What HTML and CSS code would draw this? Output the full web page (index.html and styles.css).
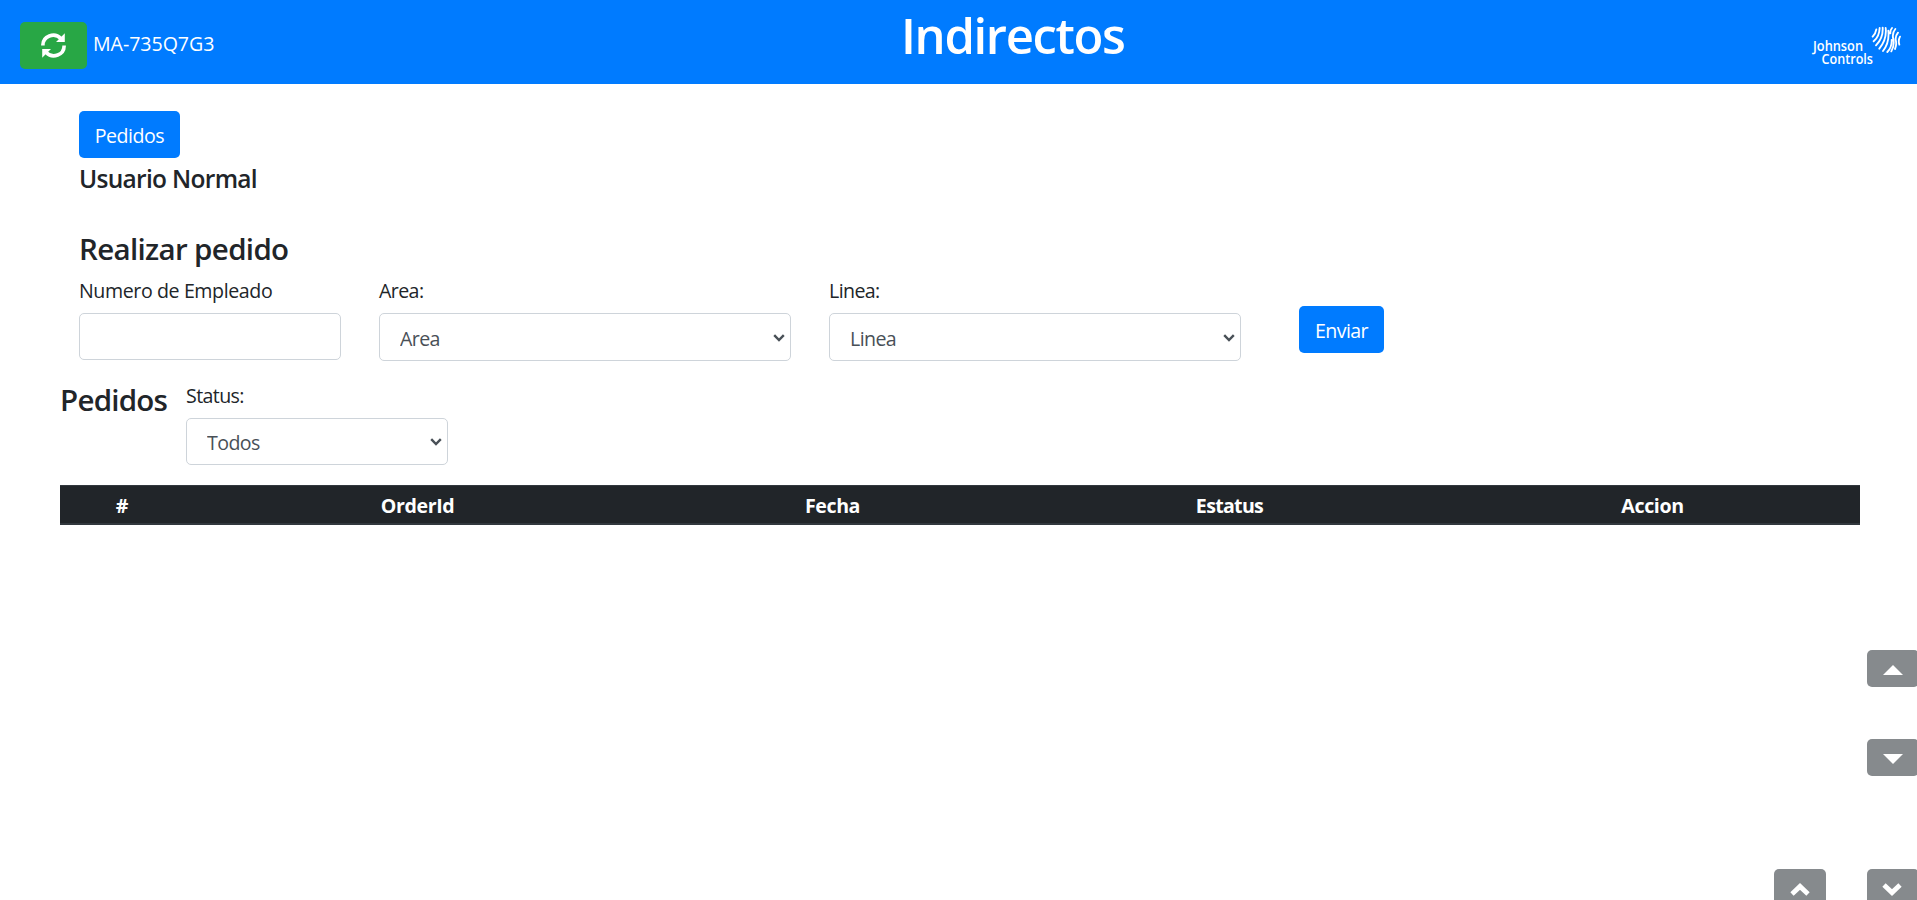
FILE: index.html
```html
<!DOCTYPE html>
<html lang="es">
<head>
<meta charset="utf-8">
<title>Indirectos</title>
<link rel="stylesheet" href="styles.css">
</head>
<body>
<header class="topbar">
  <div class="station">
    <button class="btn btn-refresh" aria-label="Actualizar">
      <svg width="25" height="25" viewBox="0 0 25 25"><g fill="none" stroke="#fff" stroke-width="3.6"><path d="M1.9 12.5A10.3 9.9 0 0 1 19.8 5.5"/><path d="M23.1 12.5A10.3 9.9 0 0 1 5.2 19.5"/></g><path fill="#fff" d="M23.8 0.3V9H15ZM1.2 24.7V16H10Z"/></svg>
    </button>
    <span class="t-station">MA-735Q7G3</span>
  </div>
  <h1 class="t-title">Indirectos</h1>
  <svg class="logo" width="90" height="44" viewBox="0 0 90 44">
    <g fill="#fff" font-family="'Open Sans', sans-serif" font-size="13.6" font-weight="600">
      <text x="2" y="27" textLength="50" lengthAdjust="spacingAndGlyphs">Johnson</text>
      <text x="10.500" y="40" textLength="51.500" lengthAdjust="spacingAndGlyphs">Controls</text>
    </g>
    <g transform="translate(57 -2) scale(.3333)" fill="none" stroke="#fff" stroke-width="5.6" stroke-linecap="round">
      <path d="M14 44Q23 34 25 22M17 58Q34 44 35 18M24 70Q46 48 44 17M34 80Q57 52 53 18M45 87Q65 62 61 26M58 90Q72 76 71 54M72 18Q66 25 67 34M82 21Q71 34 76 52Q80 70 70 88M90 32Q80 44 84 58Q86 70 81 81M96 44Q90 55 94 68"/>
    </g>
  </svg>
</header>
<main>
  <section class="order">
    <button class="btn btn-primary btn-orders"><span class="t-orders">Pedidos</span></button>
    <h5 class="t-user">Usuario Normal</h5>
    <h3 class="t-make">Realizar pedido</h3>
    <form class="fields">
      <label class="field narrow"><span class="t-emp">Numero de Empleado</span><input class="control" type="text"></label>
      <label class="field wide"><span class="t-area">Area:</span>
        <select class="control tall"><option>Area</option></select></label>
      <label class="field wide"><span class="t-line">Linea:</span>
        <select class="control tall"><option>Linea</option></select></label>
      <button type="button" class="btn btn-primary btn-send"><span class="t-send">Enviar</span></button>
    </form>
  </section>
  <section class="filter">
    <h3 class="t-list">Pedidos</h3>
    <label class="field narrow"><span class="t-status">Status:</span>
      <select class="control"><option>Todos</option></select></label>
  </section>
  <table class="orders">
    <colgroup><col class="c1"><col class="c2"><col class="c3"><col class="c4"><col class="c5"></colgroup>
    <thead><tr><th>#</th><th>OrderId</th><th>Fecha</th><th class="t-estatus">Estatus</th><th>Accion</th></tr></thead>
  </table>
</main>
<button class="float f-up" aria-label="Subir"><svg width="20" height="10" viewBox="0 0 20 10"><path fill="#fff" d="M0 10L10 0L20 10Z"/></svg></button>
<button class="float f-down" aria-label="Bajar"><svg width="20" height="10" viewBox="0 0 20 10"><path fill="#fff" d="M0 0H20L10 10Z"/></svg></button>
<button class="float f-first" aria-label="Inicio"><svg width="20" height="13" viewBox="0 0 20 13"><path fill="none" stroke="#fff" stroke-width="4.8" d="M2 11L10 3.400L18 11"/></svg></button>
<button class="float f-last" aria-label="Final"><svg width="20" height="13" viewBox="0 0 20 13"><path fill="none" stroke="#fff" stroke-width="4.8" d="M2 2L10 9.600L18 2"/></svg></button>
</body>
</html>
```
FILE: styles.css
```css
* { box-sizing: border-box; }
body {
  margin: 0;
  height: 900px;
  overflow: hidden;
  background: #fff;
  color: #212529;
  font: 400 19.6px/30px "Open Sans", "Noto Sans", sans-serif;
  letter-spacing: -0.4px;
}
h1, h3, h5 { margin: 0; font-weight: 600; white-space: nowrap; }
span { white-space: nowrap; }
button, input, select { font: inherit; letter-spacing: inherit; }

.topbar {
  height: 84px;
  padding: 0 16px 0 20px;
  display: grid;
  grid-template-columns: 881px 1fr 90px;
  background: #007bff;
  color: #fff;
}
.station { display: flex; align-items: flex-start; gap: 6px; padding-top: 22px; }
.station span { padding-top: 7px; letter-spacing: -0.05px; }
.topbar h1 { font-size: 49px; line-height: 60px; padding-top: 5px; letter-spacing: -1.35px; }
.logo { margin-top: 24px; letter-spacing: 0; }

.btn { height: 47px; padding: 0; border: 0; border-radius: 5px; color: #fff; display: flex; align-items: center; justify-content: center; }
.btn-refresh { width: 67px; background: #28a745; }
.btn-primary { background: #007bff; padding-top: 3px; }
.btn-orders { width: 101px; letter-spacing: -0.5px; }
.btn-send { width: 85px; margin: 36px 0 0 20px; letter-spacing: -0.6px; }

.order { padding: 27px 0 0 79px; }
.t-user { font-size: 24.5px; line-height: 30px; margin-top: 6px; letter-spacing: -0.7px; }
.t-make { font-size: 29.5px; line-height: 36px; margin-top: 37px; letter-spacing: -0.66px; }
.fields { display: flex; align-items: flex-start; gap: 38px; margin-top: 3px; }
.field { display: flex; flex-direction: column; gap: 8px; line-height: 30px; }
.field > span { height: 35px; padding-top: 6px; }
.t-area, .t-line, .t-status { letter-spacing: -0.6px; }
.narrow { width: 262px; }
.wide { width: 412px; }
.control {
  width: 100%;
  height: 47px;
  padding: 2px 14px 0 20px;
  border: 1px solid #ced4da;
  border-radius: 5px;
  background: #fff;
  color: #495057;
}
select.control {
  appearance: none;
  letter-spacing: -0.6px;
  background: #fff url("data:image/svg+xml,%3Csvg xmlns='http://www.w3.org/2000/svg' width='12' height='8' viewBox='0 0 12 8'%3E%3Cpath d='M1.200 1.200L6 6L10.800 1.200' fill='none' stroke='%23495057' stroke-width='2.400'/%3E%3C/svg%3E") no-repeat right 5px top 19px;
}
select.tall { height: 48px; padding-top: 3px; background-position: right 5px top 20px; }

.filter { display: flex; gap: 20px; padding: 14px 0 0 60px; }
.filter h3 { width: 106px; font-size: 29.5px; line-height: 36px; padding-top: 7px; letter-spacing: -0.75px; }

.orders { width: 1800px; margin: 20px 0 0 60px; border-collapse: collapse; table-layout: fixed; background: #212529; color: #fff; }
.orders tr { height: 38px; }
.orders th { padding: 3px 0 0; border-top: 1px solid #32383e; border-bottom: 2px solid #32383e; font-weight: 700; line-height: 30px; }
.orders .t-estatus { letter-spacing: -0.7px; }
.c1 { width: 124px; }
.c2 { width: 467px; }
.c3 { width: 363px; }
.c4 { width: 431px; }
.c5 { width: 415px; }

.float {
  position: absolute;
  width: 52px;
  height: 37px;
  padding: 3px 0 0;
  border: 0;
  border-radius: 5px;
  background: #868a8d;
  display: flex;
  align-items: center;
  justify-content: center;
}
.f-up { left: 1867px; top: 650px; }
.f-down { left: 1867px; top: 739px; }
.f-first { left: 1774px; top: 869px; }
.f-last { left: 1867px; top: 869px; padding-right: 2px; }
```
